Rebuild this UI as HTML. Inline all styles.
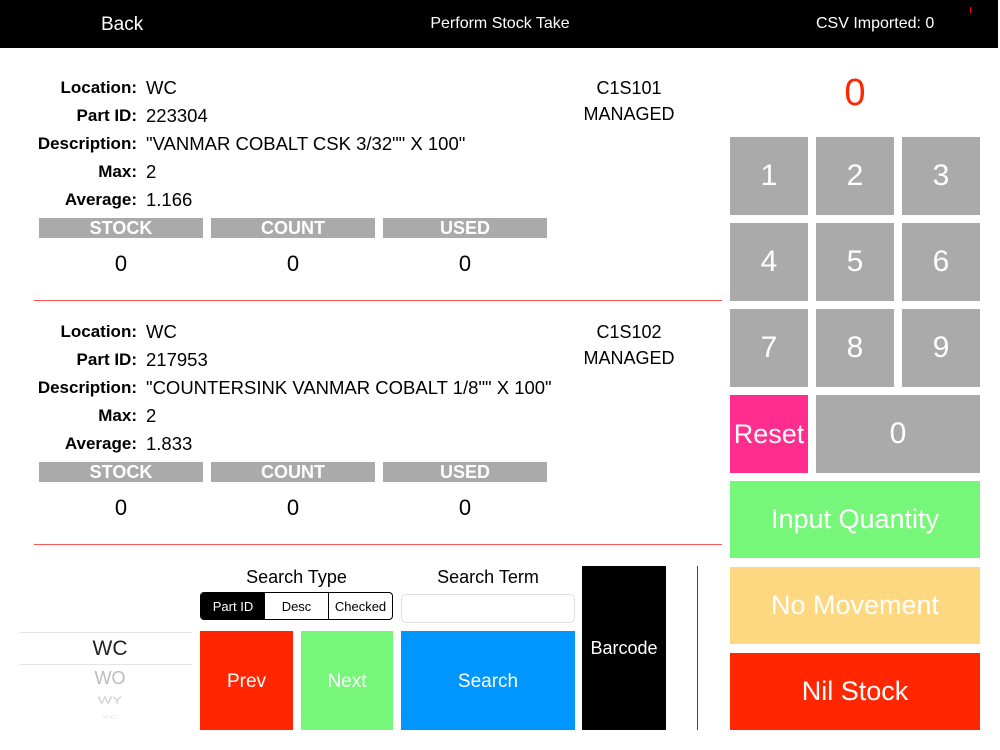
<!DOCTYPE html>
<html><head><style>
*{margin:0;padding:0;box-sizing:border-box}
body{width:1000px;height:750px;background:#fff;position:relative;overflow:hidden;font-family:"Liberation Sans",sans-serif;color:#000}
.a{position:absolute}
.c{display:flex;align-items:center;justify-content:center}
.row{position:absolute;left:0;width:700px;height:22px;line-height:22px;white-space:nowrap}
.row b{position:absolute;right:563px;font-size:17px}
.row span{position:absolute;left:146px;font-size:18.5px}
.bar{position:absolute;height:20px;background:#aaa;color:#fff;font-weight:bold;font-size:18px;display:flex;align-items:center;justify-content:center}
.num{position:absolute;width:164px;text-align:center;font-size:22px;line-height:24px}
.k{position:absolute;background:#aaa;color:#fff;font-size:30px;display:flex;align-items:center;justify-content:center}
.big{position:absolute;left:730px;width:250px;height:77px;color:#fff;font-size:27px;display:flex;align-items:center;justify-content:center}
</style></head><body>
<div class="a" style="left:0;top:0;width:998px;height:48px;background:#000"></div>
<div class="a" style="left:101px;top:14px;color:#fff;font-size:19px">Back</div>
<div class="a" style="left:0;width:1000px;top:15px;text-align:center;color:#fff;font-size:16px">Perform Stock Take</div>
<div class="a" style="left:816px;top:15px;color:#fff;font-size:16px">CSV Imported: 0</div>
<div class="a" style="left:970px;top:7px;width:1px;height:6px;background:#f00"></div>

<div class="row" style="top:77px"><b>Location:</b><span>WC</span></div>
<div class="row" style="top:105px"><b>Part ID:</b><span>223304</span></div>
<div class="row" style="top:133px"><b>Description:</b><span>"VANMAR COBALT CSK 3/32"" X 100"</span></div>
<div class="row" style="top:161px"><b>Max:</b><span>2</span></div>
<div class="row" style="top:189px"><b>Average:</b><span>1.166</span></div>
<div class="bar" style="left:39px;width:164px;top:218px">STOCK</div>
<div class="bar" style="left:211px;width:164px;top:218px">COUNT</div>
<div class="bar" style="left:383px;width:164px;top:218px">USED</div>
<div class="num" style="left:39px;top:252px">0</div><div class="num" style="left:211px;top:252px">0</div><div class="num" style="left:383px;top:252px">0</div>
<div class="a" style="left:560px;width:138px;top:75px;text-align:center;font-size:18px;line-height:26px">C1S101<br>MANAGED</div>
<div class="a" style="left:34px;top:300px;width:688px;height:1px;background:#f55"></div>

<div class="row" style="top:321px"><b>Location:</b><span>WC</span></div>
<div class="row" style="top:349px"><b>Part ID:</b><span>217953</span></div>
<div class="row" style="top:377px"><b>Description:</b><span>"COUNTERSINK VANMAR COBALT 1/8"" X 100"</span></div>
<div class="row" style="top:405px"><b>Max:</b><span>2</span></div>
<div class="row" style="top:433px"><b>Average:</b><span>1.833</span></div>
<div class="bar" style="left:39px;width:164px;top:462px">STOCK</div>
<div class="bar" style="left:211px;width:164px;top:462px">COUNT</div>
<div class="bar" style="left:383px;width:164px;top:462px">USED</div>
<div class="num" style="left:39px;top:496px">0</div><div class="num" style="left:211px;top:496px">0</div><div class="num" style="left:383px;top:496px">0</div>
<div class="a" style="left:560px;width:138px;top:319px;text-align:center;font-size:18px;line-height:26px">C1S102<br>MANAGED</div>
<div class="a" style="left:34px;top:544px;width:688px;height:1px;background:#f55"></div>

<div class="a" style="left:730px;width:250px;top:71px;text-align:center;color:#ff2600;font-size:38px;line-height:44px">0</div>
<div class="k" style="left:730px;top:137px;width:78px;height:78px">1</div>
<div class="k" style="left:816px;top:137px;width:78px;height:78px">2</div>
<div class="k" style="left:902px;top:137px;width:78px;height:78px">3</div>
<div class="k" style="left:730px;top:223px;width:78px;height:78px">4</div>
<div class="k" style="left:816px;top:223px;width:78px;height:78px">5</div>
<div class="k" style="left:902px;top:223px;width:78px;height:78px">6</div>
<div class="k" style="left:730px;top:309px;width:78px;height:78px">7</div>
<div class="k" style="left:816px;top:309px;width:78px;height:78px">8</div>
<div class="k" style="left:902px;top:309px;width:78px;height:78px">9</div>
<div class="k" style="left:730px;top:395px;width:78px;height:78px;background:#ff2d8e;font-size:27px">Reset</div>
<div class="k" style="left:816px;top:395px;width:164px;height:78px">0</div>
<div class="big" style="top:481px;background:#77f77a">Input Quantity</div>
<div class="big" style="top:567px;background:#fdd880">No Movement</div>
<div class="big" style="top:653px;background:#ff2600">Nil Stock</div>

<div class="a" style="left:20px;top:632px;width:172px;height:1px;background:#e4e4e4"></div>
<div class="a" style="left:20px;top:664px;width:172px;height:1px;background:#e4e4e4"></div>
<div class="a" style="left:20px;width:180px;top:637px;text-align:center;font-size:21px;color:#222">WC</div>
<div class="a" style="left:20px;width:180px;top:668px;text-align:center;font-size:18px;color:#bbb">WO</div>
<div class="a" style="left:20px;width:180px;top:692px;text-align:center;font-size:15px;color:#ccc;transform:scaleY(.7)">WY</div>
<div class="a" style="left:20px;width:180px;top:710px;text-align:center;font-size:12px;color:#ddd;transform:scaleY(.4)">YC</div>

<div class="a" style="left:200px;width:193px;top:567px;text-align:center;font-size:18px">Search Type</div>
<div class="a" style="left:200px;top:592px;width:193px;height:28px;border:1px solid #000;border-radius:4px;display:flex;font-size:13px;overflow:hidden">
<div class="c" style="width:64px;background:#000;color:#fff">Part ID</div>
<div class="c" style="width:64px;border-right:1px solid #000">Desc</div>
<div class="c" style="flex:1">Checked</div></div>
<div class="a" style="left:401px;width:174px;top:567px;text-align:center;font-size:18px">Search Term</div>
<div class="a" style="left:401px;top:594px;width:174px;height:29px;border:1px solid #e0e0e0;border-radius:5px"></div>
<div class="a c" style="left:200px;top:631px;width:93px;height:99px;background:#ff2600;color:#fff;font-size:19px;padding-top:3px">Prev</div>
<div class="a c" style="left:301px;top:631px;width:92px;height:99px;background:#77f77a;color:#fff;font-size:19px;padding-top:3px">Next</div>
<div class="a c" style="left:401px;top:631px;width:174px;height:99px;background:#0096ff;color:#fff;font-size:19px;padding-top:3px">Search</div>
<div class="a c" style="left:582px;top:566px;width:84px;height:164px;background:#000;color:#fff;font-size:18px">Barcode</div>
<div class="a" style="left:697px;top:566px;width:1px;height:164px;background:#444"></div>
</body></html>
